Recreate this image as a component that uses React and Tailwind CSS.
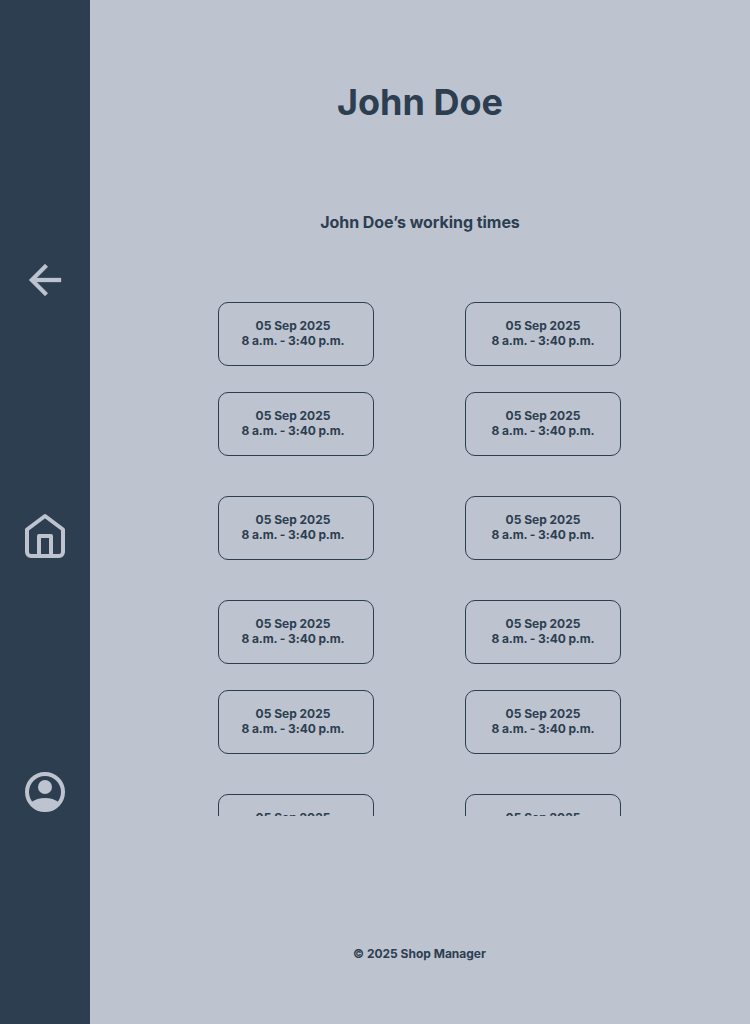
import React from "react";

const rows = ["mt-0", "mt-[26px]", "mt-10", "mt-10", "mt-[26px]", "mt-10"];

function ShiftCard({ nudge = "" }) {
  return (
    <div className="flex h-16 w-[156px] shrink-0 flex-col items-center rounded-[10px] border border-[#2c3e50] pt-[15px] text-xs leading-[15px] font-bold">
      <div className={nudge}>
        <p className="text-center whitespace-nowrap">05 Sep 2025</p>
        <p className="text-center tracking-[-0.1px] whitespace-nowrap">8 a.m. - 3:40 p.m.</p>
      </div>
    </div>
  );
}

function Sidebar() {
  return (
    <nav className="flex w-[90px] shrink-0 flex-col items-center bg-[#2c3e50] pt-64 text-[#bdc3cf]">
      <button aria-label="Back" className="size-12">
        <svg viewBox="0 0 48 48" className="size-12" fill="currentColor" stroke="currentColor" strokeWidth="0.3" strokeLinejoin="round">
          <path d="M40 22H15.66L26.83 10.83L24 8L8 24L24 40L26.83 37.17L15.66 26H40V22Z" />
        </svg>
      </button>
      <button aria-label="Home" className="mt-52 size-12">
        <svg viewBox="0 0 48 48" className="size-12" fill="none" stroke="currentColor" strokeWidth="4" strokeLinejoin="round">
          <path d="M6 17.5L24 4L42 17.5V40A4 4 0 0 1 38 44H10A4 4 0 0 1 6 40Z" />
          <path d="M18 44V24H30V44" />
        </svg>
      </button>
      <button aria-label="Account" className="mt-52 size-12">
        <svg viewBox="0 0 48 48" className="size-12" fill="none">
          <circle cx="24" cy="24" r="18" stroke="currentColor" strokeWidth="4" />
          <circle cx="24" cy="19" r="7" fill="currentColor" />
          <path d="M10 34.200C14 31.500 18.700 30 24 30S34 31.500 38 34.200C35 39.500 30 43 24 43S13 39.500 10 34.200Z" fill="currentColor" />
        </svg>
      </button>
    </nav>
  );
}

export default function App() {
  return (
    <div className="flex h-[1024px] w-[750px] overflow-hidden bg-[#bdc3cf] font-['Inter',sans-serif] text-[#2c3e50]">
      <Sidebar />
      <main className="flex flex-1 flex-col items-center">
        <h1 className="mt-20 text-4xl leading-[44px] font-bold">John Doe</h1>
        <h2 className="mt-[88px] text-base leading-5 font-bold tracking-[-0.05px]">John Doe’s working times</h2>
        <section className="mt-[70px] h-[514px] w-[404px] shrink-0 overflow-hidden pr-px">
          {rows.map((gap, i) => (
            <div key={i} className={`flex justify-between ${gap}`}>
              <ShiftCard nudge="pr-1.5" />
              <ShiftCard />
            </div>
          ))}
        </section>
        <footer className="mt-[130px] pr-px text-xs leading-[15px] font-bold">© 2025 Shop Manager</footer>
      </main>
    </div>
  );
}
